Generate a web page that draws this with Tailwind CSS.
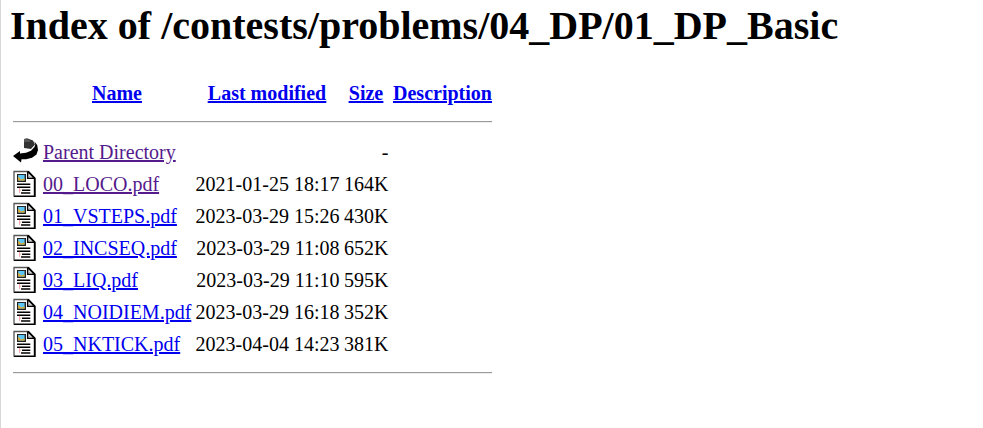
<!DOCTYPE html>
<html lang="en">
<head>
<meta charset="utf-8">
<title>Index of /contests/problems/04_DP/01_DP_Basic</title>
<script src="https://cdn.jsdelivr.net/npm/@tailwindcss/browser@4"></script>
</head>
<body class="bg-white">
<svg class="hidden">
  <symbol id="doc" viewBox="0 0 25 28">
    <path d="M1 2.5H15L21.5 9V27H1Z" fill="#fff" stroke="#555" stroke-width="1.3"/>
    <path d="M15 2.5L21.8 9.3V28M1 27.8H22" fill="none" stroke="#000" stroke-width="1.8"/>
    <path d="M14.7 2.5V9.3H21.5" fill="none" stroke="#000" stroke-width="1.5"/>
    <path d="M15.5 6L19 8.6H15.5Z" fill="#aaa"/>
    <path d="M4 5H13V13H4Z" fill="#222"/>
    <path d="M5.2 6H11.6V11.6H5.2Z" fill="#5cc8fa"/>
    <path d="M5.2 7.5L8 10.4L11.6 9.5V11.6H5.2Z" fill="#e8a824"/>
    <path d="M4 15.3H17.3M4 18.2H17.3M9 21.2H17.3M8 24H17.3" stroke="#000" stroke-width="1.5"/>
    <path d="M6 21.2H8.3M6.5 18.9V24.2" stroke="#faa" stroke-width="1"/>
  </symbol>
  <symbol id="back" viewBox="0 0 25 28">
    <path d="M11 2L14 1.2L20 3.5L22 7.5L18 12L11 11Z" fill="#333"/>
    <path d="M12 2V5M14 2V5M16 3V5" stroke="#999" stroke-width=".7"/>
    <path d="M21.3 4.5L24.2 8L25 13L23.5 17.5L19 20.8L13 22.2L8.5 22.2L8 25.5L0 19L7 14V16.5L13 15.8L18 13.7L21.5 10L22.3 7.5Z" fill="#000"/>
  </symbol>
</svg>
<div class="h-[428px] overflow-hidden border-l border-[#d8d8d8] pl-[9px] font-['Liberation_Serif',serif] text-[20px] leading-8 text-black">
  <h1 class="h-[77px] pt-[3px] text-[40px] leading-[46px] font-bold whitespace-nowrap">Index of /contests/problems/04_DP/01_DP_Basic</h1>
  <main class="ml-[3px] w-[479px] whitespace-nowrap">
    <div class="grid h-11 grid-cols-[30px_148px_4px_144px_5px_44px_5px_99px] text-center font-bold text-[#0000ee] underline decoration-2">
      <a class="col-start-2">Name</a><a class="col-start-4">Last modified</a><a class="col-start-6">Size</a><a class="col-start-8">Description</a>
    </div>
    <hr class="mb-[13px] h-[2px] border-t border-b border-t-[#9a9a9a] border-b-[#eeeeee]">
    <div class="grid grid-cols-[30px_148px_148.5px_49px] auto-rows-[32px]">
      <svg class="mt-px h-7 w-[25px]"><use href="#back"/></svg><a class="text-[#551a8b] underline decoration-2">Parent Directory</a><span></span><span class="text-right">-</span>
      <svg class="mt-px h-7 w-[25px]"><use href="#doc"/></svg><a class="text-[#551a8b] underline decoration-2">00_LOCO.pdf</a><span class="text-right">2021-01-25 18:17</span><span class="text-right">164K</span>
      <svg class="mt-px h-7 w-[25px]"><use href="#doc"/></svg><a class="text-[#0000ee] underline decoration-2">01_VSTEPS.pdf</a><span class="text-right">2023-03-29 15:26</span><span class="text-right">430K</span>
      <svg class="mt-px h-7 w-[25px]"><use href="#doc"/></svg><a class="text-[#0000ee] underline decoration-2">02_INCSEQ.pdf</a><span class="text-right">2023-03-29 11:08</span><span class="text-right">652K</span>
      <svg class="mt-px h-7 w-[25px]"><use href="#doc"/></svg><a class="text-[#0000ee] underline decoration-2">03_LIQ.pdf</a><span class="text-right">2023-03-29 11:10</span><span class="text-right">595K</span>
      <svg class="mt-px h-7 w-[25px]"><use href="#doc"/></svg><a class="text-[#0000ee] underline decoration-2">04_NOIDIEM.pdf</a><span class="text-right">2023-03-29 16:18</span><span class="text-right">352K</span>
      <svg class="mt-px h-7 w-[25px]"><use href="#doc"/></svg><a class="text-[#0000ee] underline decoration-2">05_NKTICK.pdf</a><span class="text-right">2023-04-04 14:23</span><span class="text-right">381K</span>
    </div>
    <hr class="mt-3 h-[2px] border-t border-b border-t-[#9a9a9a] border-b-[#eeeeee]">
  </main>
</div>
</body>
</html>
